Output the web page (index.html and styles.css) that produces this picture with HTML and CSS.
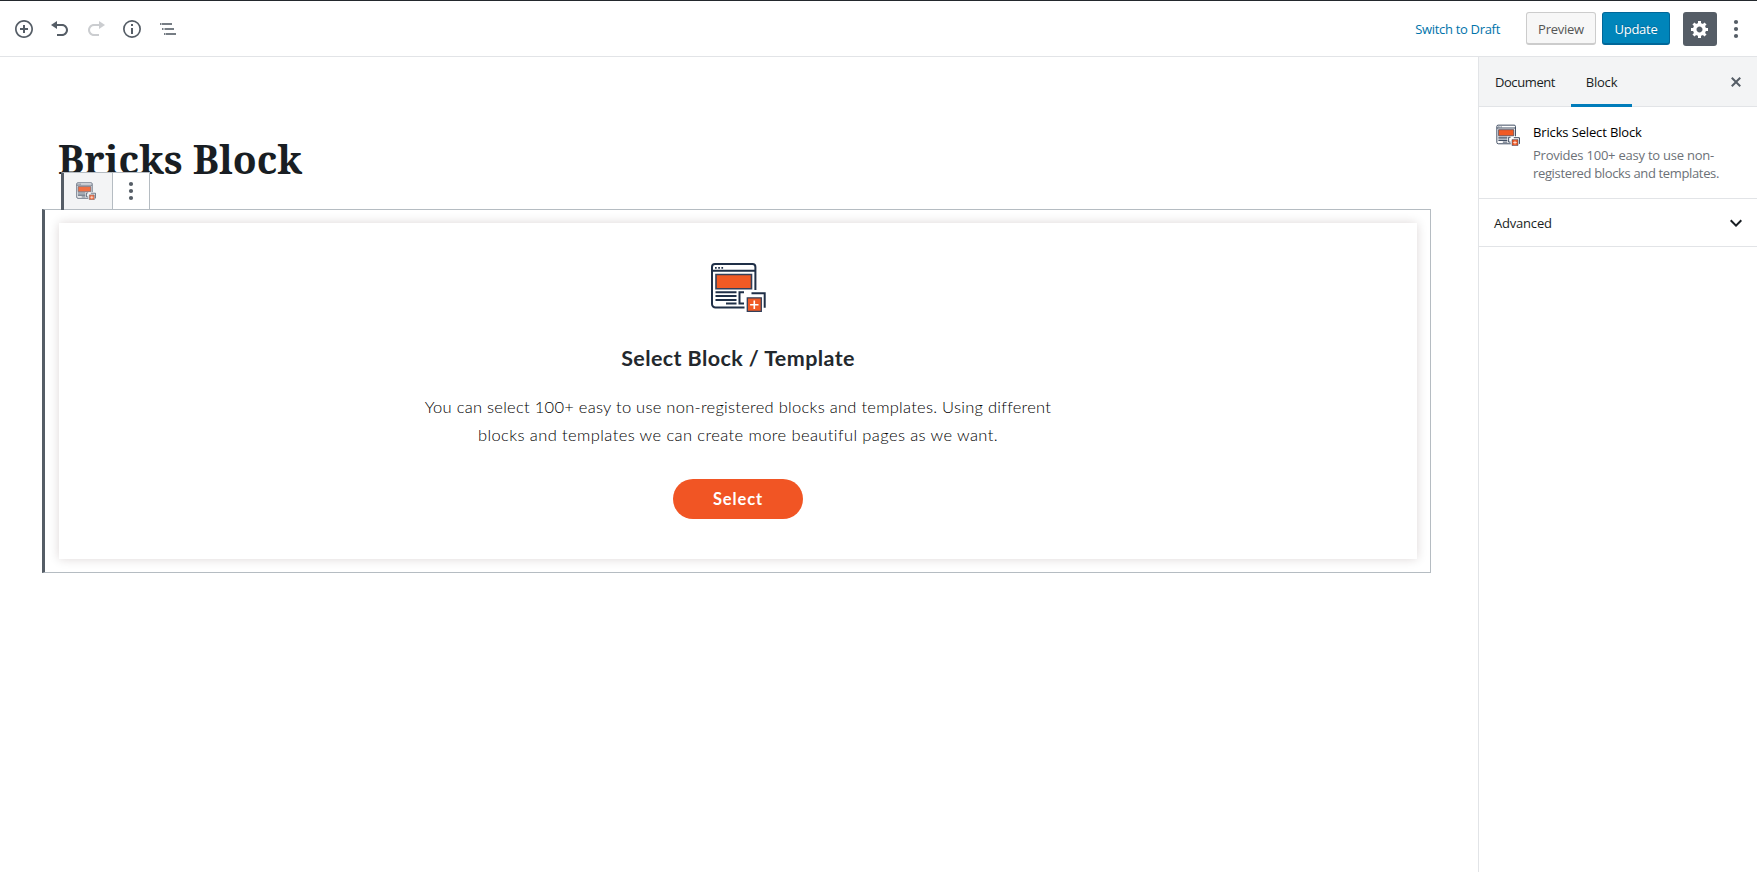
FILE: index.html
```html
<!DOCTYPE html>
<html lang="en">
<head>
<meta charset="utf-8">
<title>Edit Page</title>
<link rel="stylesheet" href="styles.css">
</head>
<body>
<svg class="defs" width="0" height="0" aria-hidden="true">
  <symbol id="bricks" viewBox="0 0 56 50">
    <g fill="none" stroke="#1f2f47" stroke-width="2">
      <path d="M45.400 28V5a3 3 0 0 0-3-3H5a3 3 0 0 0-3 3v37a3.500 3.500 0 0 0 3.500 3.500H34.500M2 8.700h43"/>
      <path d="M5.500 30.300h21M5.500 34.100h21M5.500 37.900h21M16 41.600h10.500M34 30.300h-4.500v11.300H34M41.500 31.300h13.200v14.500"/>
    </g>
    <path d="M5 5h1.700v1.700H5zM8.200 5h1.700v1.700H8.200zM11.400 5h1.700v1.700h-1.700z" fill="#1f2f47"/>
    <path d="M6 12.500h35.500v14.300H6z" fill="#f15a24" stroke="#33405a" stroke-width="1.600"/>
    <path d="M37.300 35.800h14v13.600h-14z" fill="#f15a24" stroke="#33405a" stroke-width="1.300"/>
    <path d="M44.300 38.500v8.400M40.100 42.700h8.400" stroke="#fff" stroke-width="1.600"/>
  </symbol>
  <symbol id="dots" viewBox="0 0 20 20"><circle cx="10" cy="3" r="2.100"/><circle cx="10" cy="10" r="2.100"/><circle cx="10" cy="17" r="2.100"/></symbol>
</svg>
<header class="topbar">
  <div class="tools">
    <svg class="ico" viewBox="0 0 20 20"><path d="M10 1c-5 0-9 4-9 9s4 9 9 9 9-4 9-9-4-9-9-9zm0 16.300c-4 0-7.300-3.300-7.300-7.300S6 2.700 10 2.700s7.300 3.300 7.300 7.300-3.300 7.300-7.300 7.300zM11 6H9v3H6v2h3v3h2v-3h3V9h-3V6z"/></svg>
    <svg class="ico" viewBox="0 0 20 20"><path d="M12 5H7V2L1 6l6 4V7h5c2.200 0 4 1.800 4 4s-1.800 4-4 4H7v2h5c3.300 0 6-2.700 6-6s-2.700-6-6-6z"/></svg>
    <svg class="ico off" viewBox="0 0 20 20"><path d="M8 5h5V2l6 4-6 4V7H8c-2.200 0-4 1.800-4 4s1.800 4 4 4h5v2H8c-3.300 0-6-2.700-6-6s2.700-6 6-6z"/></svg>
    <svg class="ico" viewBox="0 0 20 20"><path d="M10 1a9 9 0 1 0 0 18 9 9 0 0 0 0-18zm0 16.300a7.300 7.300 0 1 1 0-14.600 7.300 7.300 0 0 1 0 14.600zM9 5h2v2H9zM9 9h2v6H9z"/></svg>
    <svg class="ico list" viewBox="0 0 20 20"><path d="M2 4h1.500v2H2zM4 4h10v2H4zM4 9h1.500v2H4zM6.500 9H16v2H6.500zM6 14h1.500v2H6zM8 14h10v2H8z"/></svg>
  </div>
  <div class="actions">
    <a class="draft">Switch to Draft</a>
    <button class="btn preview">Preview</button>
    <button class="btn update">Update</button>
    <button class="gear"><svg class="ico" viewBox="0 0 20 20"><path d="M18 12h-2.180c-.17.7-.44 1.350-.81 1.930l1.540 1.540-2.100 2.100-1.540-1.540c-.58.36-1.230.63-1.910.79V19H8v-2.180c-.68-.16-1.330-.43-1.910-.79l-1.540 1.540-2.120-2.120 1.540-1.540c-.36-.58-.63-1.230-.79-1.910H1V9.030h2.170c.16-.7.44-1.350.8-1.940L2.430 5.550l2.100-2.100 1.540 1.540c.58-.37 1.240-.64 1.930-.81V2h3v2.180c.68.16 1.330.43 1.910.79l1.540-1.540 2.120 2.120-1.540 1.540c.36.59.64 1.240.8 1.940H18V12zm-8.500 1.500c1.660 0 3-1.340 3-3s-1.340-3-3-3-3 1.340-3 3 1.340 3 3 3z"/></svg></button>
    <svg class="ico more"><use href="#dots"/></svg>
  </div>
</header>
<div class="layout">
  <main class="editor">
    <h1 class="title">Bricks Block</h1>
    <section class="block">
      <div class="toolbar">
        <div class="type"><svg class="brick-s"><use href="#bricks"/></svg></div>
        <div class="opts"><svg class="ico"><use href="#dots"/></svg></div>
      </div>
      <div class="card">
        <svg class="brick-l"><use href="#bricks"/></svg>
        <h2 class="heading">Select Block / Template</h2>
        <p class="desc"><span class="l1">You can select 100+ easy to use non-registered blocks and templates. Using different</span><br><span class="l2">blocks and templates we can create more beautiful pages as we want.</span></p>
        <button class="select">Select</button>
      </div>
    </section>
  </main>
  <aside class="sidebar">
    <nav class="tabs">
      <span class="tab doc">Document</span>
      <span class="tab active">Block</span>
      <svg class="ico close" viewBox="0 0 20 20"><path d="M14.950 6.460L11.410 10l3.540 3.540-1.410 1.410L10 11.420l-3.530 3.530-1.420-1.420L8.580 10 5.050 6.470l1.420-1.420L10 8.580l3.540-3.530z"/></svg>
    </nav>
    <div class="info">
      <svg class="brick-m"><use href="#bricks"/></svg>
      <div class="about">
        <div class="name">Bricks Select Block</div>
        <div class="text"><span class="t1">Provides 100+ easy to use non-</span><br>registered blocks and templates.</div>
      </div>
    </div>
    <div class="advanced"><span>Advanced</span><svg class="chev" viewBox="0 0 24 24"><path d="M7.410 8.590 12 13.170l4.590-4.580L18 10l-6 6-6-6z"/></svg></div>
  </aside>
</div>
</body>
</html>
```
FILE: styles.css
```css
* { box-sizing: border-box; }
body { margin: 0; height: 872px; overflow: hidden; display: flex; flex-direction: column; background: #fff; color: #191e23; font-family: "Open Sans", "Noto Sans", sans-serif; font-size: 13px; }
button { font: inherit; padding: 0; margin: 0; }
svg { display: block; flex: none; }
.defs { position: absolute; }
.ico { width: 20px; height: 20px; fill: #555d66; }
.topbar { height: 57px; flex: none; border-top: 1px solid #23282d; border-bottom: 1px solid #e2e4e7; display: flex; align-items: center; justify-content: space-between; padding: 1px 11px 0 14px; }
.tools { display: flex; gap: 16px; }
.off { opacity: .3; }
.list { opacity: .8; }
.actions { display: flex; align-items: center; }
.draft { color: #0073aa; letter-spacing: -.31px; margin-right: 26px; white-space: nowrap; }
.btn { height: 33px; margin-bottom: 1px; padding-top: 2px; border-radius: 3px; border: 1px solid #ccc; text-align: center; letter-spacing: -.26px; }
.preview { width: 70px; background: #f7f7f7; color: #555; border-bottom-width: 2px; margin-right: 6px; }
.update { width: 68px; background: #0085ba; border-color: #006799; border-bottom-width: 2px; color: #fff; text-shadow: 0 -1px 1px #006799; margin-right: 13px; }
.gear { width: 34px; height: 34px; border: 0; border-radius: 3px; background: #555d66; display: flex; align-items: center; justify-content: center; margin-right: 9px; }
.gear .ico { fill: #fff; }
.layout { flex: 1; display: flex; min-height: 0; }
.editor { flex: 1; padding: 72px 47px 0 42px; }
.title { margin: 0 0 0 16px; height: 80px; font-family: "Noto Serif", "DejaVu Serif", serif; font-weight: 700; font-size: 39.040px; line-height: 60px; white-space: nowrap; }
.block { position: relative; height: 364px; border: 1px solid #b5bcc2; border-left: 3px solid #555d66; padding: 13px 13px 13px 14px; }
.toolbar { position: absolute; left: 16px; top: -38px; width: 89px; height: 38px; display: flex; border: 1px solid #b5bcc2; border-left: 3px solid #555d66; border-bottom: 0; background: #fff; }
.toolbar::after { content: ""; position: absolute; left: 0; right: 0; bottom: 0; height: 1px; background: #b5bcc2; }
.type { width: 49px; background: #f3f4f5; border-right: 1px solid #b5bcc2; padding: 9px 0 0 12px; }
.opts { flex: 1; padding: 8px 0 0 8px; }
.brick-s { width: 20px; height: 18px; opacity: .85; }
.card { height: 336px; background: #fff; box-shadow: 0 0 10px rgba(45, 10, 10, .16); display: flex; flex-direction: column; align-items: center; padding-top: 39px; }
.brick-l { width: 56px; height: 50px; }
.heading { margin: 32px 0 0; font-family: Lato, sans-serif; font-weight: 700; font-size: 21.500px; line-height: 28px; letter-spacing: .4px; color: #23282d; white-space: nowrap; }
.desc { margin: 21px 0 0; text-align: center; font-family: Lato, sans-serif; font-weight: 300; font-size: 16.500px; line-height: 28px; color: #000; white-space: nowrap; }
.l1 { letter-spacing: .27px; }
.l2 { letter-spacing: .4px; }
.select { margin-top: 30px; width: 130px; height: 40px; flex: none; border: 0; border-radius: 20px; background: #f15524; color: #fff; font-family: Lato, sans-serif; font-weight: 700; font-size: 16.500px; letter-spacing: .9px; line-height: 40px; }
.sidebar { width: 279px; flex: none; border-left: 1px solid #e2e4e7; }
.tabs { height: 50px; background: #f3f4f5; border-bottom: 1px solid #e2e4e7; display: flex; align-items: flex-start; }
.tab { height: 50px; line-height: 50px; letter-spacing: -.2px; text-align: center; }
.doc { width: 92px; letter-spacing: -.4px; }
.active { width: 61px; border-bottom: 3px solid #007cba; }
.close { margin: 15px 11px 0 auto; }
.info { height: 92px; border-bottom: 1px solid #e2e4e7; display: flex; padding: 16px 0 0 17px; }
.brick-m { width: 24px; height: 22px; margin: 1px 13px 0 0; }
.about { white-space: nowrap; }
.name { line-height: 18px; color: #000; letter-spacing: -.14px; }
.text { margin-top: 5px; line-height: 18px; color: #6c7177; letter-spacing: -.35px; }
.t1 { letter-spacing: -.23px; }
.advanced { height: 48px; border-bottom: 1px solid #e2e4e7; display: flex; align-items: center; justify-content: space-between; padding: 0 9px 0 15px; letter-spacing: -.2px; }
.chev { width: 24px; height: 24px; fill: #191e23; }
```
